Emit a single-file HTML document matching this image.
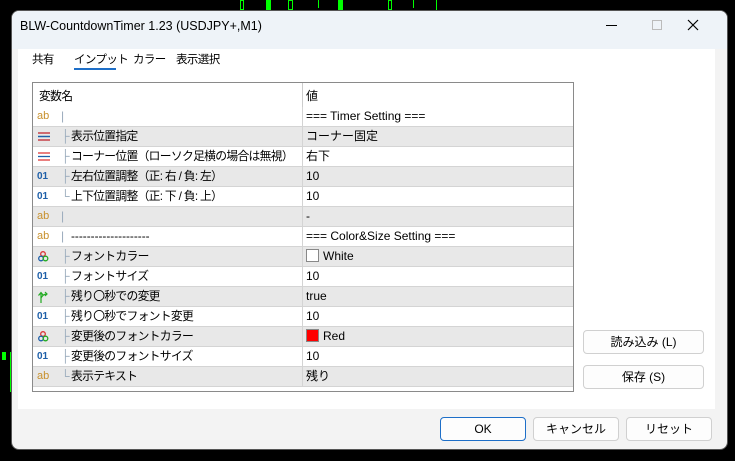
<!DOCTYPE html>
<html><head><meta charset="utf-8"><style>
*{margin:0;padding:0;box-sizing:border-box}
body{width:735px;height:461px;background:#000;position:relative;overflow:hidden;font-family:"Liberation Sans","Noto Sans CJK JP",sans-serif;font-size:12px;color:#000}
.win{position:absolute;left:11px;top:10px;width:717px;height:440px;background:#f3f3f3;border-radius:8px;overflow:hidden;border:1px solid #555}
.title{position:absolute;left:0;top:0;width:100%;height:38px;background:#eef3f8}
.abs{position:absolute}
.panel{position:absolute;left:6px;top:38px;width:697px;height:360px;background:#fff}
.tab{position:absolute;top:51px;font-size:11.5px;letter-spacing:-0.6px;white-space:nowrap}
.tbl{position:absolute;left:32px;top:82px;width:542px;height:310px;border:1px solid #8a8a8a;background:#fff}
.row{position:absolute;left:0;width:540px;height:20px;border-bottom:1px solid #d4d4d4;font-size:12px;line-height:19px;white-space:nowrap}
.g{background:#e8e8e8}
.ic{position:absolute;left:4px;top:0;width:20px;height:19px;font-size:11px}
.tr{position:absolute;left:28px;color:#9ab;}
.nm{position:absolute;left:38px;letter-spacing:-0.7px;font-size:11.8px}
.vl{position:absolute;left:273px}
.dv{position:absolute;left:269px;top:0;width:1px;height:20px;background:#d4d4d4}
.btn{position:absolute;height:24px;border:1px solid #d0d0d0;border-radius:4px;background:#fdfdfd;text-align:center;line-height:22px;font-size:12px}
.ab{color:#c8902c}.o1{color:#1e5fa8;font-weight:bold;font-size:10px}
.sw{display:inline-block;width:13px;height:13px;vertical-align:-2px;margin-right:4px;border:1px solid #888}
</style></head><body>
<div class="abs" style="left:240px;top:0;width:4px;height:10px;border:1px solid #0f0"></div>
<div class="abs" style="left:266px;top:0;width:5px;height:10px;background:#0f0"></div>
<div class="abs" style="left:288px;top:0;width:5px;height:10px;border:1px solid #0f0"></div>
<div class="abs" style="left:318px;top:0;width:1px;height:8px;background:#0f0"></div>
<div class="abs" style="left:338px;top:0;width:5px;height:10px;background:#0f0"></div>
<div class="abs" style="left:388px;top:0;width:4px;height:10px;border:1px solid #0f0"></div>
<div class="abs" style="left:413px;top:0;width:1px;height:8px;background:#0f0"></div>
<div class="abs" style="left:436px;top:0;width:1px;height:10px;background:#0f0"></div>
<div class="abs" style="left:10px;top:352px;width:1px;height:40px;background:#0f0"></div>
<div class="abs" style="left:2px;top:352px;width:4px;height:8px;background:#0f0"></div>
<div class="win">
 <div class="title"></div>
 <div class="abs" style="left:8px;top:8px;font-size:12.5px">BLW-CountdownTimer 1.23 (USDJPY+,M1)</div>
 <div class="abs" style="left:594px;top:14px;width:11px;height:1px;background:#000"></div>
 <div class="abs" style="left:640px;top:9px;width:10px;height:10px;border:1px solid #bbb"></div>
 <svg class="abs" style="left:675px;top:8px" width="12" height="12"><path d="M1 1L11 11M11 1L1 11" stroke="#000" stroke-width="1.2"/></svg>
 <div class="panel"></div>
</div>
<div class="tab" style="left:32px">共有</div>
<div class="tab" style="left:74px">インプット</div>
<div class="abs" style="left:74px;top:68px;width:42px;height:2px;background:#1e6fc8"></div>
<div class="tab" style="left:133px">カラー</div>
<div class="tab" style="left:176px">表示選択</div>
<div class="tbl">
 <div class="row" style="top:0;height:24px;border:none;line-height:26px"><span class="nm" style="left:6px">変数名</span><div class="abs" style="left:269px;top:0;width:1px;height:24px;background:#ccc"></div><span class="vl">値</span></div>
 <div class="row" style="top:24px"><span class="ic ab">ab</span><span class="tr">|</span><div class="dv"></div><span class="vl">=== Timer Setting ===</span></div>
 <div class="row g" style="top:44px"><svg class="ic" viewBox="0 0 20 19"><path d="M1 6h12M1 9.5h12M1 13h12" stroke="#1e5fa8" stroke-width="1.3"/><path d="M1 6h12M1 13h12" stroke="#d33" stroke-width="1.3"/><path d="M1 9.5h12" stroke="#1e5fa8" stroke-width="1.3"/></svg><span class="tr">├</span><span class="nm">表示位置指定</span><div class="dv"></div><span class="vl">コーナー固定</span></div>
 <div class="row" style="top:64px"><svg class="ic" viewBox="0 0 20 19"><path d="M1 6h12M1 13h12" stroke="#d33" stroke-width="1.3"/><path d="M1 9.5h12" stroke="#1e5fa8" stroke-width="1.3"/></svg><span class="tr">├</span><span class="nm">コーナー位置（ローソク足横の場合は無視）</span><div class="dv"></div><span class="vl">右下</span></div>
 <div class="row g" style="top:84px"><span class="ic o1">01</span><span class="tr">├</span><span class="nm">左右位置調整（正: 右 / 負: 左）</span><div class="dv"></div><span class="vl">10</span></div>
 <div class="row" style="top:104px"><span class="ic o1">01</span><span class="tr">└</span><span class="nm">上下位置調整（正: 下 / 負: 上）</span><div class="dv"></div><span class="vl">10</span></div>
 <div class="row g" style="top:124px"><span class="ic ab">ab</span><span class="tr">|</span><div class="dv"></div><span class="vl">-</span></div>
 <div class="row" style="top:144px"><span class="ic ab">ab</span><span class="tr">|</span><span class="nm" style="letter-spacing:0">--------------------</span><div class="dv"></div><span class="vl">=== Color&amp;Size Setting ===</span></div>
 <div class="row g" style="top:164px"><svg class="ic" viewBox="0 0 20 19"><circle cx="6" cy="7" r="2.3" fill="none" stroke="#d33" stroke-width="1.3"/><circle cx="4" cy="11.5" r="2.3" fill="none" stroke="#1e5fa8" stroke-width="1.3"/><circle cx="8.5" cy="11.5" r="2.3" fill="none" stroke="#2a2" stroke-width="1.3"/></svg><span class="tr">├</span><span class="nm">フォントカラー</span><div class="dv"></div><span class="vl"><span class="sw" style="background:#fff"></span>White</span></div>
 <div class="row" style="top:184px"><span class="ic o1">01</span><span class="tr">├</span><span class="nm">フォントサイズ</span><div class="dv"></div><span class="vl">10</span></div>
 <div class="row g" style="top:204px"><svg class="ic" viewBox="0 0 20 19"><path d="M4 16V6M1.5 8.5L4 5.5 6.5 8.5M4 11Q6 7 10 7M8 5l2 2-2 2" fill="none" stroke="#2a2" stroke-width="1.2"/></svg><span class="tr">├</span><span class="nm">残り〇秒での変更</span><div class="dv"></div><span class="vl">true</span></div>
 <div class="row" style="top:224px"><span class="ic o1">01</span><span class="tr">├</span><span class="nm">残り〇秒でフォント変更</span><div class="dv"></div><span class="vl">10</span></div>
 <div class="row g" style="top:244px"><svg class="ic" viewBox="0 0 20 19"><circle cx="6" cy="7" r="2.3" fill="none" stroke="#d33" stroke-width="1.3"/><circle cx="4" cy="11.5" r="2.3" fill="none" stroke="#1e5fa8" stroke-width="1.3"/><circle cx="8.5" cy="11.5" r="2.3" fill="none" stroke="#2a2" stroke-width="1.3"/></svg><span class="tr">├</span><span class="nm">変更後のフォントカラー</span><div class="dv"></div><span class="vl"><span class="sw" style="background:#f00"></span>Red</span></div>
 <div class="row" style="top:264px"><span class="ic o1">01</span><span class="tr">├</span><span class="nm">変更後のフォントサイズ</span><div class="dv"></div><span class="vl">10</span></div>
 <div class="row g" style="top:284px"><span class="ic ab">ab</span><span class="tr">└</span><span class="nm">表示テキスト</span><div class="dv"></div><span class="vl">残り</span></div>
</div>
<div class="btn" style="left:583px;top:330px;width:121px">読み込み (L)</div>
<div class="btn" style="left:583px;top:365px;width:121px">保存 (S)</div>
<div class="btn" style="left:440px;top:417px;width:86px;border:1px solid #1e6fc8">OK</div>
<div class="btn" style="left:533px;top:417px;width:86px">キャンセル</div>
<div class="btn" style="left:626px;top:417px;width:86px">リセット</div>
</body></html>
